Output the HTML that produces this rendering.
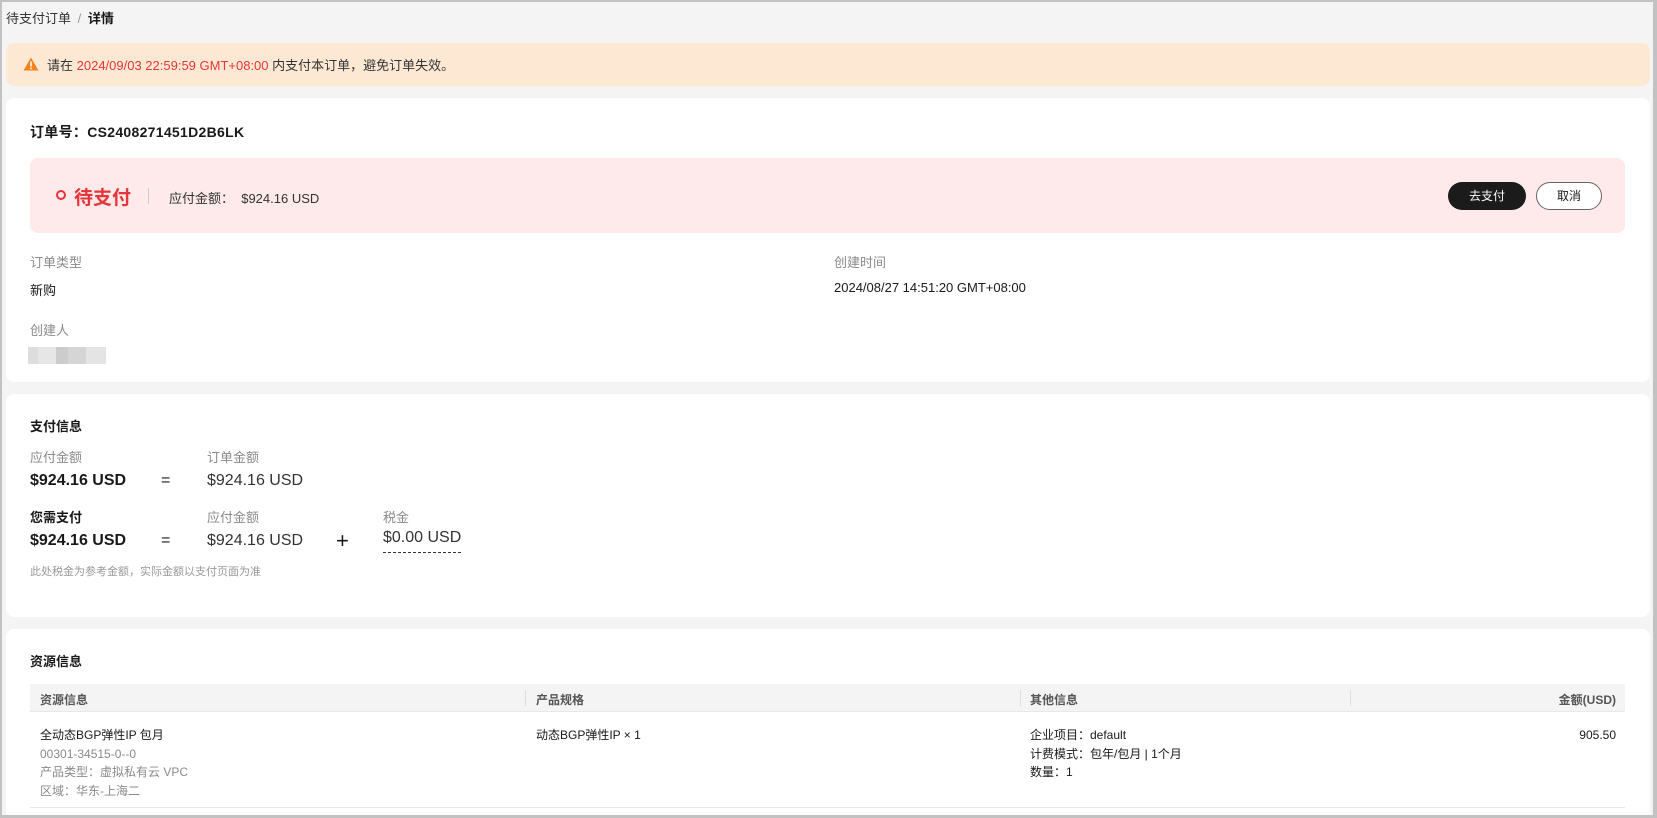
<!DOCTYPE html>
<html><head><meta charset="utf-8"><style>
*{box-sizing:border-box;margin:0;padding:0}
html,body{width:1657px;height:818px;overflow:hidden}
body{background:#f4f4f4;font-family:"Liberation Sans","Noto Sans CJK SC",sans-serif;color:#191919;position:relative;font-size:12px}
.frame{position:absolute;left:0;top:0;width:1657px;height:818px;border:2px solid #c2c2c2;border-right-width:4px;border-bottom-width:3px;pointer-events:none;z-index:5}
.abs{position:absolute;white-space:nowrap}
.card{position:absolute;left:6px;width:1644px;background:#fff;border-radius:8px}
.grey{color:#8a8a8a}
.lbl{font-size:13px;color:#8a8a8a}
</style></head><body>
<div class="frame"></div>
<div class="abs" style="left:6px;top:8px;font-size:13px;color:#333">待支付订单 <span style="color:#999;margin:0 3px">/</span> <b style="color:#191919">详情</b></div>

<div class="abs" style="left:6px;top:43px;width:1644px;height:43px;background:#fde9d3;border-radius:8px"></div>
<svg class="abs" style="left:23px;top:57px" width="16" height="14" viewBox="0 0 16 14"><path d="M8 0.5L15.5 13.5H0.5Z" fill="#f5821f"/><rect x="7.2" y="4.5" width="1.6" height="5" fill="#fff"/><rect x="7.2" y="10.6" width="1.6" height="1.6" fill="#fff"/></svg>
<div class="abs" style="left:47px;top:55px;font-size:13px;color:#333">请在 <span style="color:#e8353a">2024/09/03 22:59:59 GMT+08:00</span> 内支付本订单，避免订单失效。</div>

<div class="card" style="top:98px;height:284px"></div>
<div class="abs" style="left:30px;top:122px;font-size:14px;font-weight:bold;letter-spacing:0.3px">订单号：CS2408271451D2B6LK</div>
<div class="abs" style="left:30px;top:158px;width:1595px;height:75px;background:#feeaea;border-radius:8px"></div>
<div class="abs" style="left:56px;top:190px;width:10px;height:10px;border:2px solid #e8353a;border-radius:50%"></div>
<div class="abs" style="left:74px;top:183px;font-size:19px;font-weight:bold;color:#e8353a">待支付</div>
<div class="abs" style="left:148px;top:188px;width:1px;height:16px;background:#ccc"></div>
<div class="abs" style="left:169px;top:188px;font-size:13px;color:#333">应付金额：&nbsp; $924.16 USD</div>
<div class="abs" style="left:1448px;top:182px;width:78px;height:28px;background:#1b1b1b;border-radius:14px;color:#fff;font-size:12px;text-align:center;line-height:28px">去支付</div>
<div class="abs" style="left:1536px;top:182px;width:66px;height:28px;background:#fff;border:1px solid #666;border-radius:14px;font-size:12px;text-align:center;line-height:26px">取消</div>
<div class="abs lbl" style="left:30px;top:252px">订单类型</div>
<div class="abs" style="left:30px;top:280px;font-size:13px">新购</div>
<div class="abs lbl" style="left:834px;top:252px">创建时间</div>
<div class="abs" style="left:834px;top:280px;font-size:13px">2024/08/27 14:51:20 GMT+08:00</div>
<div class="abs lbl" style="left:30px;top:320px">创建人</div>
<div class="abs" style="left:28px;top:347px;width:78px;height:17px;background:linear-gradient(90deg,#ddd 0 10px,#e6e6e6 10px 28px,#ccc 28px 40px,#d5d5d5 40px 58px,#e4e4e4 58px 78px)"></div>

<div class="card" style="top:394px;height:223px"></div>
<div class="abs" style="left:30px;top:416px;font-size:13px;font-weight:bold">支付信息</div>
<div class="abs lbl" style="left:30px;top:447px">应付金额</div>
<div class="abs" style="left:30px;top:472px;font-size:16px;font-weight:bold">$924.16 USD</div>
<div class="abs" style="left:161px;top:472px;font-size:16px">=</div>
<div class="abs lbl" style="left:207px;top:447px">订单金额</div>
<div class="abs" style="left:207px;top:472px;font-size:16px;color:#333">$924.16 USD</div>
<div class="abs" style="left:30px;top:507px;font-size:13px;font-weight:bold">您需支付</div>
<div class="abs" style="left:30px;top:532px;font-size:16px;font-weight:bold">$924.16 USD</div>
<div class="abs" style="left:161px;top:532px;font-size:16px">=</div>
<div class="abs lbl" style="left:207px;top:507px">应付金额</div>
<div class="abs" style="left:207px;top:532px;font-size:16px;color:#333">$924.16 USD</div>
<div class="abs" style="left:336px;top:528px;font-size:22px">+</div>
<div class="abs lbl" style="left:383px;top:507px">税金</div>
<div class="abs" style="left:383px;top:529px;font-size:16px;color:#333">$0.00 USD</div>
<div class="abs" style="left:383px;top:552px;width:78px;border-top:1px dashed #333"></div>
<div class="abs" style="left:30px;top:563px;font-size:11px;color:#999">此处税金为参考金额，实际金额以支付页面为准</div>

<div class="card" style="top:629px;height:200px"></div>
<div class="abs" style="left:30px;top:651px;font-size:13px;font-weight:bold">资源信息</div>
<div class="abs" style="left:30px;top:684px;width:1595px;height:28px;background:#f4f4f4;border-bottom:1px solid #e8e8e8"></div>
<div class="abs" style="left:525px;top:690px;width:1px;height:16px;background:#ddd"></div>
<div class="abs" style="left:1020px;top:690px;width:1px;height:16px;background:#ddd"></div>
<div class="abs" style="left:1350px;top:690px;width:1px;height:16px;background:#ddd"></div>
<div class="abs" style="left:40px;top:691px;font-size:12px;color:#555;font-weight:bold">资源信息</div>
<div class="abs" style="left:536px;top:691px;font-size:12px;color:#555;font-weight:bold">产品规格</div>
<div class="abs" style="left:1030px;top:691px;font-size:12px;color:#555;font-weight:bold">其他信息</div>
<div class="abs" style="left:1540px;top:691px;width:76px;text-align:right;font-size:12px;color:#555;font-weight:bold">金额(USD)</div>
<div class="abs" style="left:40px;top:726px;font-size:12px;line-height:18.5px"><div>全动态BGP弹性IP 包月</div><div class="grey">00301-34515-0--0</div><div class="grey">产品类型：虚拟私有云 VPC</div><div class="grey">区域：华东-上海二</div></div>
<div class="abs" style="left:536px;top:726px;font-size:12px;line-height:18.5px">动态BGP弹性IP × 1</div>
<div class="abs" style="left:1030px;top:726px;font-size:12px;line-height:18.5px"><div>企业项目：default</div><div>计费模式：包年/包月 | 1个月</div><div>数量：1</div></div>
<div class="abs" style="left:1540px;top:726px;width:76px;text-align:right;font-size:12px;line-height:18.5px">905.50</div>
<div class="abs" style="left:30px;top:807px;width:1595px;height:1px;background:#e8e8e8"></div>
</body></html>
